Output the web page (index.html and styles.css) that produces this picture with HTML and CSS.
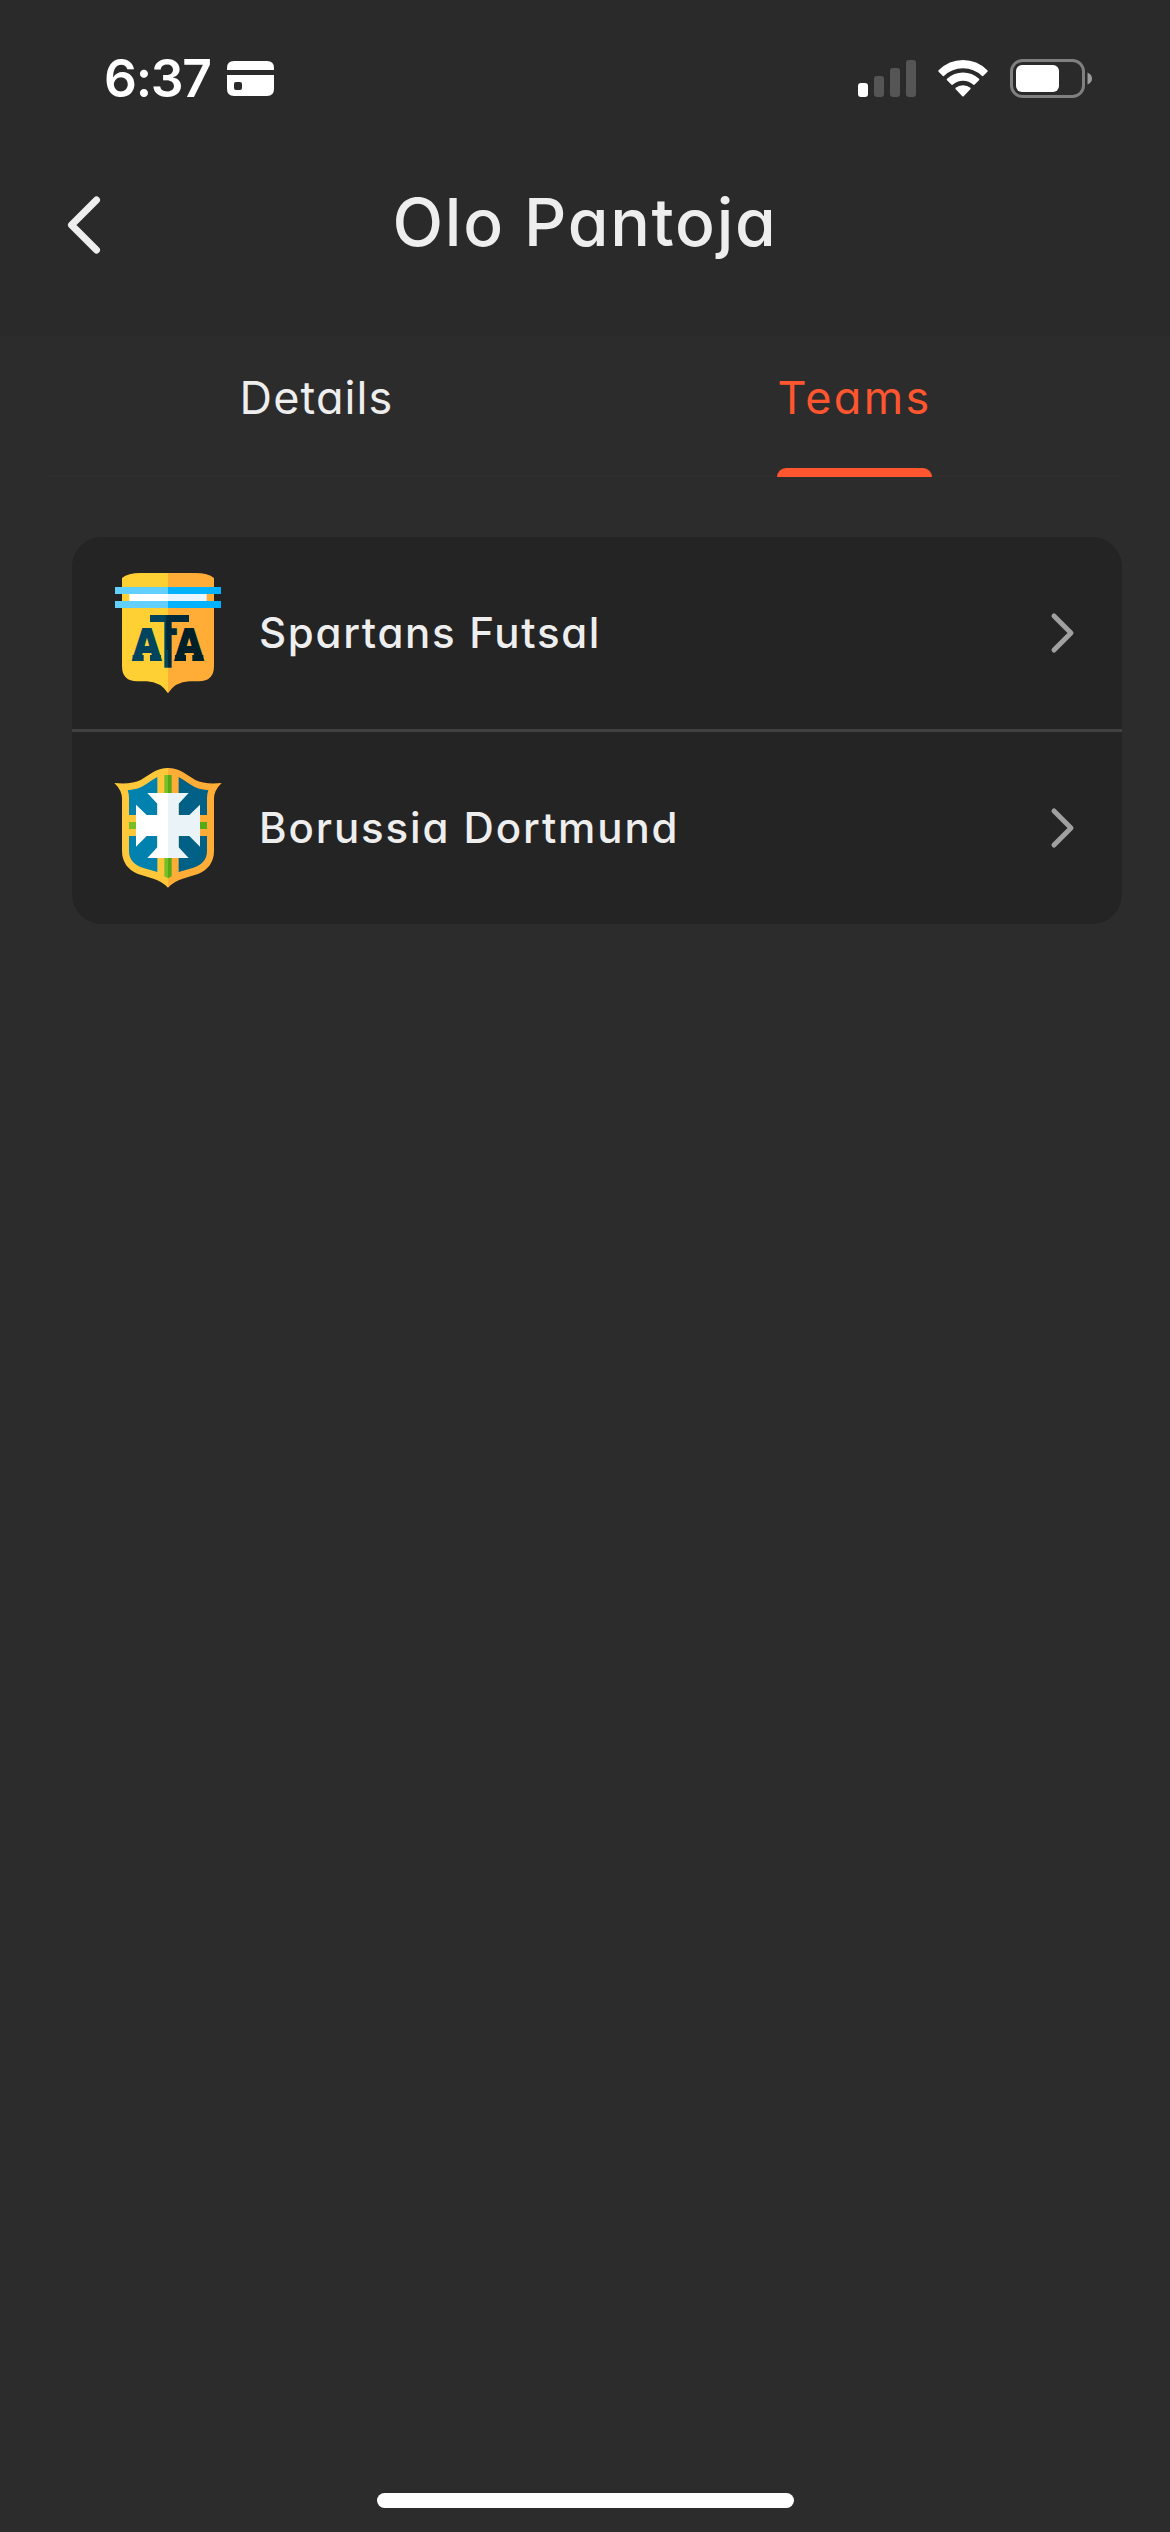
FILE: index.html
```html
<!DOCTYPE html>
<html lang="en">
<head>
<meta charset="utf-8">
<title>Olo Pantoja</title>
<link rel="stylesheet" href="styles.css">
</head>
<body>
<div class="screen">
  <header class="header">
    <div class="status">
      <div class="status-left">
        <span class="time">6:37</span>
        <svg class="card-icon" width="47" height="35" viewBox="0 0 47 35" fill="#fff">
          <path d="M0 9V7Q0 0 7 0H40Q47 0 47 7V9Z"/>
          <path fill-rule="evenodd" d="M0 14H47V28Q47 35 40 35H7Q0 35 0 28ZM9 21Q7 21 7 23V27Q7 29 9 29H13Q15 29 15 27V23Q15 21 13 21Z"/>
        </svg>
      </div>
      <div class="status-right">
        <svg width="58" height="37" viewBox="0 0 58 37">
          <rect x="0" y="23" width="10" height="14" rx="3" fill="#fff"/>
          <g fill="#555"><rect x="16" y="16" width="10" height="21" rx="3"/><rect x="32" y="8" width="10" height="29" rx="3"/><rect x="48" y="0" width="10" height="37" rx="3"/></g>
        </svg>
        <svg class="wifi" width="50" height="37" viewBox="0 0 50 37" fill="#fff">
          <path d="M.6 10.2Q-.2 11 .6 11.8L4.900 15.900Q5.500 16.400 6.200 15.800Q14 8.200 25 8.200T43.800 15.800Q44.500 16.400 45.100 15.900L49.400 11.800Q50.200 11 49.400 10.200Q39 0 25 0T.6 10.200Z"/>
          <path d="M9 18.800Q8.300 19.500 9 20.200L13.600 24.700Q14.200 25.200 14.900 24.600Q19 20.800 25 20.800T35.100 24.600Q35.800 25.200 36.400 24.700L41 20.200Q41.700 19.500 41 18.800Q34 12.600 25 12.600T9 18.800Z"/>
          <path d="M17.600 27.800Q17 28.600 17.700 29.300L24.300 36.200Q25 36.900 25.700 36.200L32.300 29.300Q33 28.600 32.400 27.800Q29.500 25.200 25 25.200T17.600 27.800Z"/>
        </svg>
        <svg width="82" height="39" viewBox="0 0 82 39">
          <rect x="1.500" y="1.500" width="72" height="36" rx="11" fill="none" stroke="#808080" stroke-width="3"/>
          <rect x="6" y="6" width="43" height="27" rx="6" fill="#fff"/>
          <path d="M77.500 13.500Q82 15.500 82 19.500T77.500 25.500Z" fill="#9b9b9b"/>
        </svg>
      </div>
    </div>
    <div class="titlebar">
      <svg class="back" width="34" height="58" viewBox="0 0 34 58" fill="none" stroke="#eee" stroke-width="7" stroke-linecap="round" stroke-linejoin="round"><path d="M29.500 4L4.500 29L29.500 54"/></svg>
      <h1 class="title">Olo Pantoja</h1>
    </div>
  </header>
  <nav class="tabs">
    <div class="tab"><span class="tab-label details">Details</span></div>
    <div class="tab active"><span class="tab-label teams">Teams</span></div>
  </nav>
  <main class="list">
    <div class="row">
      <svg class="crest" width="106" height="126" viewBox="45 60 318 378">
        <path fill="#ffd034" d="M204 69H122Q84 69 66 84V348Q66 394 112 394H140Q183 396 204 430Z"/>
        <path fill="#ffad37" d="M204 69H286Q324 69 342 84V348Q342 394 296 394H268Q225 396 204 430Z"/>
        <path fill="#62d0ff" d="M45 111H204V132H45ZM45 153H204V174H45Z"/>
        <path fill="#00b2ff" d="M204 111H363V132H204ZM204 153H363V174H204Z"/>
        <path fill="#242424" d="M45 132H66V153H45ZM342 132H363V153H342Z"/>
        <path fill="#fff" d="M88 132H204V153H88Z"/><path fill="#eaf6ff" d="M204 132H320V153H204Z"/>
        <path fill="#00445e" d="M150 195H204V353H193V216H150Z"/>
        <path fill="#002a3b" d="M204 195H267V216H215V353H204Z"/>
        <text class="mono-f" transform="translate(193 300) scale(.45 1)" fill="#002a3b">F</text>
        <text class="mono-a left" x="99" y="330">A</text>
        <text class="mono-a right" x="226" y="330">A</text>
        <g fill="#00445e"><rect x="98" y="315" width="33" height="18"/><rect x="150" y="315" width="33" height="18"/></g>
        <g fill="#002029"><rect x="225" y="315" width="33" height="18"/><rect x="277" y="315" width="33" height="18"/></g>
      </svg>
      <span class="name spartans">Spartans Futsal</span>
      <svg class="chevron" width="24" height="40" viewBox="0 0 24 40" fill="none" stroke="#a0a0a0" stroke-width="5" stroke-linecap="round" stroke-linejoin="round"><path d="M3 3L20 20L3 37"/></svg>
    </div>
    <div class="row">
      <svg class="crest" width="106" height="126" viewBox="45 45 318 378">
        <path fill="#ffc83a" d="M204 54Q181 54 160 66L122 90Q94 104 43 99Q66 121 66 146V302Q66 350 112 371L160 386Q185 393 204 413Z"/>
        <path fill="#ffad37" d="M204 54Q227 54 248 66L286 90Q314 104 365 99Q342 121 342 146V302Q342 350 296 371L248 386Q223 393 204 413Z"/>
        <path fill="#0081ae" d="M172 81V195H87V144Q87 132 83 121Q115 119 138 103Q154 91 172 81ZM87 258H172V366L128 353Q87 340 87 302Z"/>
        <path fill="#006086" d="M236 81V195H321V144Q321 132 325 121Q293 119 270 103Q254 91 236 81ZM321 258H236V366L280 353Q321 340 321 302Z"/>
        <path fill="#78bf27" d="M193 75H204V385L193 379ZM87 216H120V237H87Z"/>
        <path fill="#57aa17" d="M204 75H215V379L204 385ZM288 216H321V237H288Z"/>
        <path fill="#fff" d="M204 129H142L172 161V195H140L108 164V290L140 258H172V292L142 324H204Z"/>
        <path fill="#eaf3f8" d="M204 129H266L236 161V195H268L300 164V290L268 258H236V292L266 324H204Z"/>
      </svg>
      <span class="name borussia">Borussia Dortmund</span>
      <svg class="chevron" width="24" height="40" viewBox="0 0 24 40" fill="none" stroke="#a0a0a0" stroke-width="5" stroke-linecap="round" stroke-linejoin="round"><path d="M3 3L20 20L3 37"/></svg>
    </div>
  </main>
  <div class="home-indicator"></div>
</div>
</body>
</html>
```

FILE: styles.css
```css
* { box-sizing: border-box; }
body { margin: 0; background: #2c2c2c; color: #eee; font-family: Inter, "Liberation Sans", sans-serif; font-feature-settings: "cv11" 1; }
svg { display: block; flex: none; overflow: visible; }
.screen { width: 1170px; height: 2532px; display: flex; flex-direction: column; }
.header { height: 336px; background: #2a2a2a; flex: none; }
.status { height: 156px; padding: 0 78px 0 104px; display: flex; align-items: center; justify-content: space-between; }
.status-left, .status-right { display: flex; align-items: center; }
.time { width: 123px; margin-top: -1px; color: #fff; font-size: 51.5px; font-weight: 600; line-height: 60px; letter-spacing: -1.3px; }
.status-right { gap: 22px; }
.titlebar { height: 132px; display: flex; align-items: center; justify-content: center; position: relative; }
.back { position: absolute; left: 67px; top: 40px; }
.title { margin: 0; font-size: 66px; line-height: 80px; font-weight: 500; letter-spacing: 1.7px; }
.tabs { margin: 0 48px; height: 141px; display: flex; border-bottom: 2px solid #2e2e2e; flex: none; }
.tab { flex: 1; display: flex; justify-content: center; font-size: 45px; line-height: 52px; }
.tab-label { height: 141px; padding-top: 36px; white-space: nowrap; }
.details { letter-spacing: 1.1px; }
.teams { width: 155px; margin-left: 2px; text-align: center; letter-spacing: 2.3px; position: relative; }
.active { color: #ff5630; }
.teams::after { content: ""; position: absolute; left: 0; right: 0; bottom: 0; height: 9px; border-radius: 9px 9px 0 0; background: #ff5630; }
.list { margin: 60px 48px 0 72px; border-radius: 30px; background: #242424; overflow: hidden; flex: none; }
.row { height: 192px; padding: 0 47px 0 43px; display: flex; align-items: center; }
.row + .row { height: 195px; border-top: 3px solid #414141; }
.name { flex: 1; margin-left: 38px; font-size: 42px; font-weight: 450; line-height: 50px; white-space: nowrap; }
.spartans { letter-spacing: 1.7px; }
.borussia { letter-spacing: 1.9px; }
.mono-f { font: bold 144px "DejaVu Sans", sans-serif; }
.mono-a { font: bold 138px "Liberation Mono", monospace; stroke-width: 6px; }
.left { fill: #00445e; stroke: #00445e; }
.right { fill: #002029; stroke: #002029; }
.home-indicator { width: 417px; height: 15px; border-radius: 8px; background: #fff; margin: auto auto 24px 377px; flex: none; }
```
